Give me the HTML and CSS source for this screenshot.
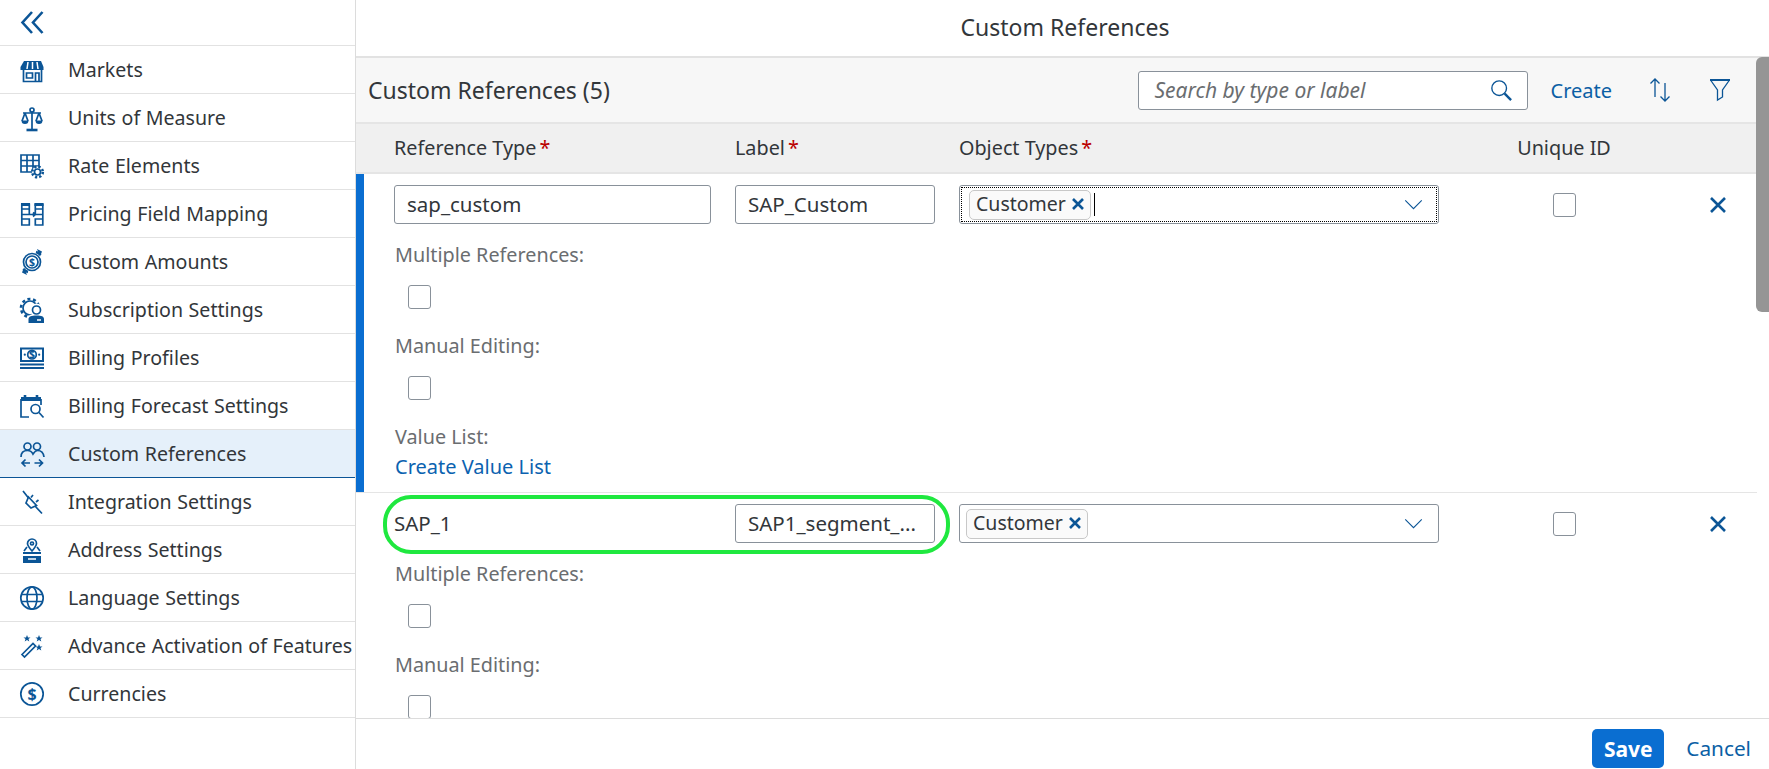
FILE: index.html
```html
<!doctype html>
<html>
<head>
  <meta charset="utf-8">
  <title>Custom References</title>
  <link rel="stylesheet" href="styles.css">
</head>
<body>
  <aside class="sidebar">
    <div class="collapse">
      <svg class="icon" viewBox="0 0 24 24"><path class="thick" d="M12 1 2.500 11.500 12 22M22.500 1 13 11.500 22.500 22"/></svg>
    </div>
    <ul class="nav">
      <li>
        <svg class="icon" viewBox="0 0 24 24"><path class="solid" d="M4 3h17l2.500 6v3h-23V9z"/><path class="gap" d="M8 4 7 11M12.500 4v7M17 4l1 7"/><path d="M3.500 12v11.500h18V12"/><path d="M6.500 15h6v5h-6zM15.500 23v-8h3.500v8"/></svg>
        <span>Markets</span>
      </li>
      <li>
        <svg class="icon" viewBox="0 0 24 24"><circle cx="12" cy="4" r="2"/><path d="M12 6v17M3 7h18"/><path class="thick" d="M6.500 24h11"/><path d="M5 7 2 15M5 7l3 8M19 7l-3 8M19 7l3 8"/><path class="solid" d="M1.500 14.500h7a3.500 3.500 0 0 1-7 0zM15.500 14.500h7a3.500 3.500 0 0 1-7 0z"/></svg>
        <span>Units of Measure</span>
      </li>
      <li>
        <svg class="icon" viewBox="0 0 24 24"><path d="M1 1h18v17H1zM1 6.500h18M1 12h18M7 1v17M13 1v17"/><circle class="cover" cx="17.500" cy="18" r="5.500"/><circle class="thick" cx="17.500" cy="18" r="5.300" stroke-dasharray="2.200 2"/><circle cx="17.500" cy="18" r="3"/></svg>
        <span>Rate Elements</span>
      </li>
      <li>
        <svg class="icon" viewBox="0 0 24 24"><path class="solid" d="M1 1h9v3H1zM14.500 1h9v3h-9z"/><path d="M1.800 1.500v11h7.500v-11M1.800 7h7.500M22.800 1.500v11h-7.500v-11M15.300 7h7.500M1.800 12.500V23h7.500v-6H1.800M22.800 12.500V23h-7.500v-6h7.500M9.300 12.500h6M13 10.500l2.300 2-2.300 2"/></svg>
        <span>Pricing Field Mapping</span>
      </li>
      <li>
        <svg class="icon" viewBox="0 0 24 24"><circle cx="12" cy="12" r="8.500"/><circle cx="12" cy="12" r="6"/><text class="dollar small" x="12" y="15.800">$</text><path class="thick" d="M16 2c2 .5 3.500 1.500 4.500 3M8 22c-2-.5-3.500-1.500-4.500-3"/><path class="solid" d="m17 -1 5 2.500-2 5zM7 25l-5-2.500 2-5z"/></svg>
        <span>Custom Amounts</span>
      </li>
      <li>
        <svg class="icon" viewBox="0 0 24 24"><circle cx="10" cy="10" r="7"/><circle class="thick" cx="10" cy="10" r="9" stroke-dasharray="3 2.650"/><circle class="cover" cx="16.500" cy="12" r="6.500"/><path class="cover" d="M7 25v-4c0-3 3-5 9-5s9 2 9 5v4z"/><circle cx="16.500" cy="12" r="4"/><path class="solid" d="M8.500 25v-4c0-2.500 3-3.500 8-3.500s7.500 1 7.500 3.500v4z"/><path class="gap" d="M17 22h4"/></svg>
        <span>Subscription Settings</span>
      </li>
      <li>
        <svg class="icon" viewBox="0 0 24 24"><path class="solid" d="M0 1.500h24v14.500H0z"/><path class="gap-fill" d="M2 3.500h20V14H2z"/><circle cx="12" cy="8.700" r="4.300"/><text class="dollar small" x="12" y="11.700">$</text><circle class="dot" cx="4.800" cy="8.700" r="1.100"/><circle class="dot" cx="19.200" cy="8.700" r="1.100"/><path class="medium" d="M0 18.500h24M0 22h24"/></svg>
        <span>Billing Profiles</span>
      </li>
      <li>
        <svg class="icon" viewBox="0 0 24 24"><path class="solid" d="M1 3h20v4H1z"/><path class="thick" d="M5 1v2M17 1v2"/><path d="M1 5v18h8M21 5v6"/><circle cx="15.500" cy="15" r="4.500"/><path d="m19 18.500 4.500 5"/></svg>
        <span>Billing Forecast Settings</span>
      </li>
      <li class="active">
        <svg class="icon" viewBox="0 0 24 24"><circle cx="7.500" cy="4.500" r="3.500"/><circle cx="17" cy="4.500" r="3.500"/><path d="M1 15c0-4 2.500-6.500 6.500-6.500 3 0 4.500 1.500 5.500 3.500 1-1.500 2.500-3.500 4.500-3.500 4 0 6 2.500 6.500 6.500"/><path d="M2 21h8M5.500 17.500 2 21l3.500 3.500M14.500 21h8M19 17.500l3.500 3.500-3.500 3.500"/></svg>
        <span>Custom References</span>
      </li>
      <li>
        <svg class="icon" viewBox="0 0 24 24"><path d="m3 1 5.500 7M15 16l7 7.500"/><path d="m8.500 7 8 8.500-5.500 2.500-5-5zM11 7.500 13 5M16 12l2.500-2"/></svg>
        <span>Integration Settings</span>
      </li>
      <li>
        <svg class="icon" viewBox="0 0 24 24"><path d="M12 13c-3-3.500-4.500-6-4.500-7.500a4.500 4.500 0 0 1 9 0C16.500 7 15 9.500 12 13z"/><circle cx="12" cy="5.500" r="1.500"/><path d="M7 9l-3 4M17 9l3 4"/><path class="solid" d="M3 14h18v2H3zM3 18h18v7H3z"/><path class="gap" d="M8 21h8"/></svg>
        <span>Address Settings</span>
      </li>
      <li>
        <svg class="icon" viewBox="0 0 24 24"><circle cx="12" cy="12" r="11.200"/><ellipse cx="12" cy="12" rx="5" ry="11.200"/><path d="M1.500 8.500h21M1.500 15.500h21"/></svg>
        <span>Language Settings</span>
      </li>
      <li>
        <svg class="icon" viewBox="0 0 24 24"><path d="m2 22 11-11 2.500 2.500-11 11z" transform="translate(0 -1.500)"/><path class="solid" d="m7 1 1 2.500h2.500L8.500 5l.8 2.500L7 6l-2.300 1.500.8-2.500L3.500 3.500H6zM19 1l1 2.500h2.500L20.500 5l.8 2.500L19 6l-2.300 1.500.8-2.500-2-1.500H18zM19 10l1 2.500h2.500l-2 1.500.8 2.500L19 15l-2.300 1.500.8-2.500-2-1.500H18z"/></svg>
        <span>Advance Activation of Features</span>
      </li>
      <li>
        <svg class="icon" viewBox="0 0 24 24"><circle cx="12" cy="12" r="11.200"/><text class="dollar" x="12" y="17.500">$</text></svg>
        <span>Currencies</span>
      </li>
    </ul>
  </aside>

  <main class="content">
    <header class="title">Custom References</header>

    <div class="toolbar">
      <h2 class="toolbar-title">Custom References (5)</h2>
      <div class="search">
        <span>Search by type or label</span>
        <svg class="icon search-icon" viewBox="0 0 24 24"><circle cx="10" cy="10" r="8"/><path class="thick" d="m16 16 7 7"/></svg>
      </div>
      <a class="link create">Create</a>
      <svg class="icon sort-icon" viewBox="0 0 26 24"><path d="M8 19V1M3.500 5.500 8 1l4.500 4.500M18 5v18M13.500 18.500 18 23l4.500-4.500"/></svg>
      <svg class="icon filter-icon" viewBox="0 0 22 24"><path class="medium" d="M1 2h20"/><path d="m1.500 2 7 10v10l5-3v-7l7-10"/></svg>
    </div>

    <div class="columns grid">
      <div>Reference Type<b>*</b></div>
      <div>Label<b>*</b></div>
      <div>Object Types<b>*</b></div>
      <div class="center">Unique ID</div>
    </div>

    <div class="scroller">
      <section class="record open">
        <div class="grid">
          <div class="input wide">sap_custom</div>
          <div class="input narrow">SAP_Custom</div>
          <div class="input multi focused">
            <span class="token">Customer <svg class="icon token-x" viewBox="0 0 14 14"><path class="thick" d="m2 2 10 10M12 2 2 12"/></svg></span>
            <i class="caret"></i>
            <svg class="icon chevron" viewBox="0 0 20 12"><path d="M1 1.500 10 10.500 19 1.500"/></svg>
          </div>
          <div class="center"><span class="check"></span></div>
          <svg class="icon remove" viewBox="0 0 18 18"><path class="thick" d="m2 2 14 14M16 2 2 16"/></svg>
        </div>
        <div class="detail">
          <div class="label first">Multiple References:</div>
          <span class="check indented"></span>
          <div class="label">Manual Editing:</div>
          <span class="check indented"></span>
          <div class="label">Value List:</div>
          <a class="link value-link">Create Value List</a>
        </div>
      </section>

      <section class="record">
        <div class="grid">
          <div class="plain">SAP_1</div>
          <div class="input narrow">SAP1_segment_...</div>
          <div class="input multi">
            <span class="token">Customer <svg class="icon token-x" viewBox="0 0 14 14"><path class="thick" d="m2 2 10 10M12 2 2 12"/></svg></span>
            <svg class="icon chevron" viewBox="0 0 20 12"><path d="M1 1.500 10 10.500 19 1.500"/></svg>
          </div>
          <div class="center"><span class="check"></span></div>
          <svg class="icon remove" viewBox="0 0 18 18"><path class="thick" d="m2 2 14 14M16 2 2 16"/></svg>
        </div>
        <div class="detail">
          <div class="label first">Multiple References:</div>
          <span class="check indented"></span>
          <div class="label">Manual Editing:</div>
          <span class="check indented"></span>
        </div>
      </section>
    </div>

    <footer class="footer">
      <button class="save">Save</button>
      <a class="link cancel">Cancel</a>
    </footer>

    <div class="highlight"></div>
    <div class="thumb"></div>
  </main>
</body>
</html>
```

FILE: styles.css
```css
html, body {
  width: 100%;
  height: 100%;
  margin: 0;
  padding: 0;
  overflow: hidden;
  font-family: "Noto Sans", sans-serif;
  font-size: 19.8px;
  color: #32363a;
  background: #fff;
}
body {
  display: flex;
}

/* icons */
.icon {
  flex: none;
  width: 24px;
  height: 24px;
  fill: none;
  stroke: #0b5596;
  stroke-width: 1.5;
  overflow: visible;
}
.nav .icon { stroke-width: 1.7; }
.icon .thick { stroke-width: 2.6; }
.icon .medium { stroke-width: 2; }
.icon .solid { fill: #0b5596; stroke: none; }
.icon .gap { stroke: #fff; stroke-width: 1.5; }
.icon .gap-fill { fill: #fff; stroke: none; }
.icon .cover { fill: #fff; stroke: none; }
.icon .dot { fill: #0b5596; stroke: none; }
.icon .dollar {
  fill: #0b5596;
  stroke: none;
  font-size: 16px;
  font-weight: 700;
  text-anchor: middle;
}
.icon .dollar.small { font-size: 10.500px; }
.active .gap { stroke: #e5f0fa; }

/* left navigation */
.sidebar {
  flex: none;
  width: 355px;
  border-right: 1px solid #dcdcdc;
}
.collapse {
  height: 46px;
  padding-left: 20px;
  display: flex;
  align-items: center;
  box-sizing: border-box;
  border-bottom: 1px solid #e2e2e2;
}
.nav {
  list-style: none;
  margin: 0;
  padding: 0;
}
.nav li {
  display: flex;
  align-items: center;
  gap: 24px;
  height: 47px;
  padding-left: 20px;
  border-bottom: 1px solid #e2e2e2;
  white-space: nowrap;
  font-size: 19.600px;
  word-spacing: 0.5px;
}
.nav li.active {
  background: #e5f0fa;
  border-bottom-color: #0b5596;
}

/* main column */
.content {
  flex: 1;
  min-width: 0;
  display: flex;
  flex-direction: column;
}
.title {
  flex: none;
  height: 58px;
  box-sizing: border-box;
  padding: 0 0 2px 5px;
  border-bottom: 2px solid #e2e2e2;
  display: flex;
  align-items: center;
  justify-content: center;
  font-size: 23px;
}
.toolbar {
  flex: none;
  height: 66px;
  box-sizing: border-box;
  padding: 0 38px 0 12px;
  display: flex;
  align-items: center;
  background: #f7f7f7;
  border-bottom: 2px solid #e5e5e5;
}
.toolbar-title {
  margin: 0;
  flex: 1;
  font-size: 23px;
  font-weight: 400;
}
.search {
  width: 390px;
  height: 39px;
  box-sizing: border-box;
  padding: 0 15px 0 16px;
  display: flex;
  align-items: center;
  justify-content: space-between;
  background: #fff;
  border: 1px solid #89919a;
  border-radius: 3px;
  font-style: italic;
  font-size: 21px;
  color: #6a6d70;
}
.link {
  color: #0b5fa5;
}
.create {
  margin-left: 23px;
  font-size: 20px;
}
.sort-icon {
  margin-left: 35px;
  width: 26px;
  stroke-width: 1.3;
}
.filter-icon {
  margin-left: 36px;
  width: 22px;
  stroke-width: 1.3;
}
.search-icon {
  width: 22px;
  height: 22px;
}

/* table rows share one grid */
.grid {
  display: grid;
  grid-template-columns: 341px 224px 559px 92px 1fr;
  align-items: center;
  padding-left: 38px;
}
.columns {
  flex: none;
  height: 46px;
  padding-bottom: 2px;
  background: #f0f0f0;
  border-bottom: 2px solid #e5e5e5;
  box-sizing: content-box;
}
.columns b {
  margin-left: 3px;
  font-weight: 400;
  color: #bb0000;
}
.center {
  display: flex;
  justify-content: center;
  white-space: nowrap;
}
.scroller {
  flex: 1;
  min-height: 0;
  overflow: hidden;
}
.record {
  padding-top: 11px;
  padding-bottom: 13px;
  border-right: 12px solid transparent;
}
.record.open {
  height: 319px;
  box-sizing: border-box;
  box-shadow: inset 8px 0 0 #0a6ed1;
  position: relative;
}
.record.open::after {
  content: "";
  position: absolute;
  left: 0;
  right: 0;
  bottom: 0;
  border-bottom: 1px solid #e5e5e5;
}
.input {
  height: 39px;
  box-sizing: border-box;
  padding: 0 12px 2px;
  display: flex;
  align-items: center;
  background: #fff;
  border: 1px solid #89919a;
  border-radius: 3px;
  white-space: nowrap;
  font-size: 20.500px;
}
.wide { width: 317px; }
.narrow { width: 200px; }
.multi {
  width: 480px;
  padding: 0 15px 0 6px;
  gap: 3px;
  position: relative;
}
.focused {
  padding-left: 9px;
}
.focused::after {
  content: "";
  position: absolute;
  inset: 1px;
  border: 1px dotted #000;
  pointer-events: none;
}
.plain {
  height: 37px;
  padding-bottom: 2px;
  display: flex;
  align-items: center;
  font-size: 20.500px;
}
.token {
  height: 30px;
  width: 122px;
  box-sizing: border-box;
  padding: 0 6px 2px;
  display: flex;
  align-items: center;
  gap: 5px;
  background: #fafafa;
  border: 1px solid #c8c8c8;
  border-radius: 5px;
  font-size: 19.500px;
}
.token-x {
  width: 14px;
  height: 14px;
}
.caret {
  width: 1px;
  height: 23px;
  background: #000;
}
.chevron {
  width: 19px;
  height: 11px;
  margin-left: auto;
  stroke-width: 1.2;
}
.check {
  display: block;
  width: 23px;
  height: 24px;
  box-sizing: border-box;
  background: #fff;
  border: 1px solid #89919a;
  border-radius: 3px;
}
.remove {
  width: 18px;
  height: 18px;
  margin-left: 99px;
}

/* fields under a row */
.detail {
  padding-left: 39px;
  color: #6a6d70;
}
.label {
  height: 24px;
  line-height: 24px;
  margin-top: 25px;
}
.label.first {
  margin-top: 19px;
}
.indented {
  margin: 18px 0 0 13px;
}
.value-link {
  display: block;
  margin-top: 6px;
  line-height: 24px;
  font-size: 20px;
  color: #0b62b0;
}

/* footer */
.footer {
  flex: none;
  height: 51px;
  box-sizing: border-box;
  padding: 10px 18px 0 0;
  display: flex;
  justify-content: flex-end;
  gap: 22px;
  border-top: 1px solid #dcdcdc;
  background: #fff;
}
.save {
  width: 72px;
  height: 39px;
  padding: 0;
  border: 0;
  border-radius: 5px;
  background: #0a6ed1;
  color: #fff;
  font: 700 21px "Noto Sans", sans-serif;
}
.cancel {
  line-height: 39px;
  font-size: 20.800px;
}

/* drawn over the page */
.highlight {
  position: absolute;
  left: 383px;
  top: 495px;
  width: 567px;
  height: 59px;
  box-sizing: border-box;
  border: 4px solid #1fe83f;
  border-radius: 28px;
}
.thumb {
  position: absolute;
  right: 0;
  top: 57px;
  width: 13px;
  height: 255px;
  background: #959595;
  border-radius: 6px 0 0 6px;
}
```
